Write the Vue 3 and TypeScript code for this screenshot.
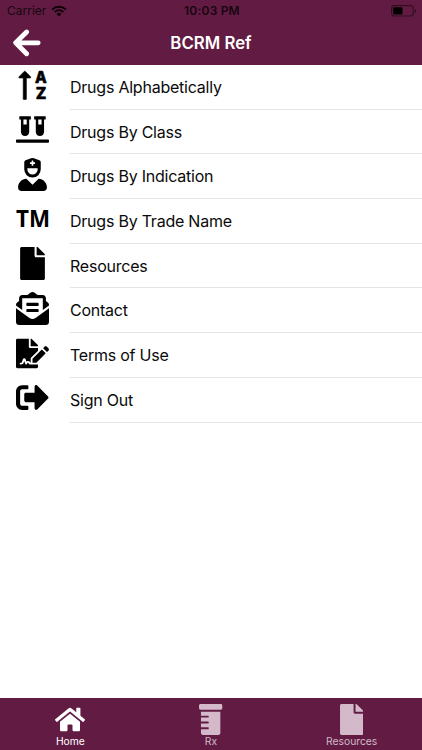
<script setup lang="ts">
interface Icon {
  viewBox: string
  path: string
}

interface MenuItem {
  label: string
  icon?: Icon
  glyph?: 'sort' | 'trademark'
}

interface Tab {
  label: string
  icon: Icon
  kind: 'wide' | 'tall'
  active: boolean
}

const file: Icon = {
  viewBox: '0 0 384 512',
  path: 'M224 136V0H24C10.7 0 0 10.7 0 24v464c0 13.3 10.7 24 24 24h336c13.3 0 24-10.7 24-24V160H248c-13.2 0-24-10.8-24-24zm160-14.1v6.1H256V0h6.1c6.4 0 12.5 2.5 17 7l97.9 98c4.5 4.5 7 10.6 7 16.9z',
}
const vials: Icon = {
  viewBox: '0 0 640 512',
  path: 'M72 64h24v240c0 44.1 35.9 80 80 80s80-35.9 80-80V64h24c4.4 0 8-3.6 8-8V8c0-4.4-3.6-8-8-8H72c-4.4 0-8 3.6-8 8v48c0 4.4 3.6 8 8 8zm72 0h64v96h-64V64zm480 384H16c-8.8 0-16 7.2-16 16v32c0 8.8 7.2 16 16 16h608c8.8 0 16-7.2 16-16v-32c0-8.8-7.2-16-16-16zM360 64h24v240c0 44.1 35.9 80 80 80s80-35.9 80-80V64h24c4.4 0 8-3.6 8-8V8c0-4.4-3.6-8-8-8H360c-4.4 0-8 3.6-8 8v48c0 4.4 3.6 8 8 8zm72 0h64v96h-64V64z',
}
const nurse: Icon = {
  viewBox: '0 0 448 512',
  path: 'M319.41,320,224,415.39,128.59,320C57.1,323.1,0,381.6,0,453.79A58.21,58.21,0,0,0,58.21,512H389.79A58.21,58.21,0,0,0,448,453.79C448,381.6,390.9,323.1,319.41,320ZM224,304A128,128,0,0,0,352,176V65.82a32,32,0,0,0-20.76-30L246.47,4.07a64,64,0,0,0-44.94,0L116.76,35.86A32,32,0,0,0,96,65.82V176A128,128,0,0,0,224,304ZM184,71.67a5,5,0,0,1,5-5h21.67V45a5,5,0,0,1,5-5h16.66a5,5,0,0,1,5,5V66.67H259a5,5,0,0,1,5,5V88.33a5,5,0,0,1-5,5H237.33V115a5,5,0,0,1-5,5H215.67a5,5,0,0,1-5-5V93.33H189a5,5,0,0,1-5-5ZM144,160H304v16a80,80,0,0,1-160,0Z',
}
const envelope: Icon = {
  viewBox: '0 0 512 512',
  path: 'M176 216h160c8.84 0 16-7.16 16-16v-16c0-8.84-7.16-16-16-16H176c-8.84 0-16 7.16-16 16v16c0 8.84 7.16 16 16 16zm-16 80c0 8.84 7.16 16 16 16h160c8.84 0 16-7.16 16-16v-16c0-8.84-7.16-16-16-16H176c-8.84 0-16 7.16-16 16v16zm96 121.13c-16.42 0-32.84-5.06-46.86-15.19L0 250.86V464c0 26.51 21.49 48 48 48h416c26.51 0 48-21.49 48-48V250.86L302.86 401.94c-14.02 10.12-30.44 15.19-46.86 15.19zm237.61-254.18c-8.85-6.94-17.24-13.47-29.61-22.81V96c0-26.51-21.49-48-48-48h-77.55c-3.04-2.2-5.87-4.26-9.04-6.56C312.6 29.17 279.2-.35 256 0c-23.2-.35-56.59 29.17-73.41 41.44-3.17 2.3-6 4.36-9.04 6.56H96c-26.51 0-48 21.49-48 48v44.14c-12.37 9.33-20.76 15.87-29.61 22.81A47.995 47.995 0 0 0 0 200.72v10.65l96 69.35V96h320v184.72l96-69.35v-10.65c0-14.74-6.78-28.67-18.39-37.77z',
}
const signature: Icon = {
  viewBox: '0 0 576 512',
  path: 'M218.17 424.14c-2.95-5.92-8.09-6.52-10.17-6.52s-7.22.59-10.02 6.19l-7.67 15.34c-6.37 12.78-25.03 11.37-29.48-2.09L144 386.59l-10.61 31.88c-5.89 17.66-22.38 29.53-41 29.53H80c-8.84 0-16-7.16-16-16s7.16-16 16-16h12.39c4.83 0 9.11-3.08 10.64-7.66l18.19-54.64c3.3-9.81 12.44-16.41 22.78-16.41s19.48 6.59 22.77 16.41l13.88 41.64c19.77-16.19 54.05-9.7 66 14.16 2.02 4.06 5.96 6.5 10.16 6.5v-82.12l128-127.09V160H248c-13.2 0-24-10.8-24-24V0H24C10.7 0 0 10.7 0 24v464c0 13.3 10.7 24 24 24h336c13.3 0 24-10.7 24-24v-40l-128-.11c-16.12-.31-30.58-9.28-37.83-23.75zM384 121.9c0-6.3-2.5-12.4-7-16.9L279.1 7c-4.5-4.5-10.6-7-17-7H256v128h128v-6.1zM288 348.2V416h67.9l162.8-162.7-67.9-67.9zM568.54 167.33l-31.87-31.87c-9.94-9.94-26.07-9.94-36.01 0l-27.25 27.25 67.88 67.88 27.25-27.25c9.95-9.94 9.95-26.07 0-36.01z',
}
const signOut: Icon = {
  viewBox: '0 0 512 512',
  path: 'M497 273L329 441c-15 15-41 4.5-41-17v-96H152c-13.3 0-24-10.7-24-24v-96c0-13.3 10.7-24 24-24h136V88c0-21.4 25.9-32 41-17l168 168c9.3 9.4 9.3 24.6 0 34zM192 436v-40c0-6.6-5.4-12-12-12H96c-17.7 0-32-14.3-32-32V160c0-17.7 14.3-32 32-32h84c6.6 0 12-5.4 12-12V76c0-6.6-5.4-12-12-12H96c-53 0-96 43-96 96v192c0 53 43 96 96 96h84c6.6 0 12-5.4 12-12z',
}
const home: Icon = {
  viewBox: '0 0 576 512',
  path: 'M280.37 148.26L96 300.11V464a16 16 0 0 0 16 16l112.06-.29a16 16 0 0 0 15.92-16V368a16 16 0 0 1 16-16h64a16 16 0 0 1 16 16v95.64a16 16 0 0 0 16 16.05L464 480a16 16 0 0 0 16-16V300L295.67 148.26a12.19 12.19 0 0 0-15.3 0zM571.6 251.47L488 182.56V44.05a12 12 0 0 0-12-12h-56a12 12 0 0 0-12 12v72.61L318.47 43a48 48 0 0 0-61 0L4.34 251.47a12 12 0 0 0-1.6 16.9l25.5 31A12 12 0 0 0 45.15 301l235.22-193.74a12.19 12.19 0 0 1 15.3 0L530.9 301a12 12 0 0 0 16.9-1.6l25.5-31a12 12 0 0 0-1.7-16.93z',
}
const bottle: Icon = {
  viewBox: '0 0 384 512',
  path: 'M32 192h120c4.4 0 8 3.6 8 8v16c0 4.4-3.6 8-8 8H32v64h120c4.4 0 8 3.6 8 8v16c0 4.4-3.6 8-8 8H32v64h120c4.4 0 8 3.6 8 8v16c0 4.4-3.6 8-8 8H32v64c0 17.6 14.4 32 32 32h256c17.6 0 32-14.4 32-32V128H32v64zM360 0H24C10.8 0 0 10.8 0 24v48c0 13.2 10.8 24 24 24h336c13.2 0 24-10.8 24-24V24c0-13.2-10.8-24-24-24z',
}

const items: MenuItem[] = [
  { label: 'Drugs Alphabetically', glyph: 'sort' },
  { label: 'Drugs By Class', icon: vials },
  { label: 'Drugs By Indication', icon: nurse },
  { label: 'Drugs By Trade Name', glyph: 'trademark' },
  { label: 'Resources', icon: file },
  { label: 'Contact', icon: envelope },
  { label: 'Terms of Use', icon: signature },
  { label: 'Sign Out', icon: signOut },
]

const tabs: Tab[] = [
  { label: 'Home', icon: home, kind: 'wide', active: true },
  { label: 'Rx', icon: bottle, kind: 'tall', active: false },
  { label: 'Resources', icon: file, kind: 'tall', active: false },
]
</script>

<template>
  <div class="screen">
    <header class="header">
      <div class="status">
        <div class="carrier">
          <span>Carrier</span>
          <svg class="wifi" viewBox="0 0 16 12">
            <path d="M1.2 4.5a9.7 9.7 0 0 1 13.6 0" />
            <path d="M3.7 7.1a6.1 6.1 0 0 1 8.6 0" />
            <path class="dot" d="M8 11.4L5.6 9a3.4 3.4 0 0 1 4.8 0z" />
          </svg>
        </div>
        <div class="time">10:03 PM</div>
        <div class="power">
          <svg class="battery" viewBox="0 0 26 12">
            <rect class="shell" x=".6" y=".6" width="21.6" height="10.4" rx="2.8" />
            <rect x="2.2" y="2.2" width="9.3" height="7.2" rx="1.2" />
            <path d="M23.8 4v4q1.4-.6 1.4-2t-1.4-2z" opacity=".55" />
          </svg>
        </div>
      </div>
      <div class="nav">
        <button class="back" aria-label="Back">
          <svg viewBox="0 0 30 28">
            <path d="M14.6 3L3.7 13.8l10.9 10.9M4.4 13.8h21.8" />
          </svg>
        </button>
        <h1 class="title">BCRM Ref</h1>
        <span></span>
      </div>
    </header>

    <main class="list">
      <div v-for="item in items" :key="item.label" class="row">
        <div class="icon">
          <svg v-if="item.icon" :viewBox="item.icon.viewBox">
            <path :d="item.icon.path" />
          </svg>
          <svg v-else-if="item.glyph === 'sort'" viewBox="0 0 33 33">
            <path class="arrow" d="M7.2 29.9V9H3.5q-1.2-.2-.5-1.2l5.2-5.4q.6-.5 1.2 0l5.2 5.4q.7 1-.5 1.2h-3.7v20.9q0 .6-.6.6H7.8q-.6 0-.6-.6z" />
            <text class="letter" x="19.1" y="13.9" textLength="11.8" lengthAdjust="spacingAndGlyphs">A</text>
            <text class="letter" x="19.7" y="30.2" textLength="10.6" lengthAdjust="spacingAndGlyphs">Z</text>
          </svg>
          <svg v-else viewBox="0 0 33 33">
            <text class="mark" x="0" y="24.3" textLength="34" lengthAdjust="spacingAndGlyphs">TM</text>
          </svg>
        </div>
        <div class="label">{{ item.label }}</div>
      </div>
    </main>

    <nav class="tabs">
      <div v-for="tab in tabs" :key="tab.label" class="tab" :class="{ active: tab.active }">
        <svg :class="tab.kind" :viewBox="tab.icon.viewBox">
          <path :d="tab.icon.path" />
        </svg>
        <span>{{ tab.label }}</span>
      </div>
    </nav>
  </div>
</template>

<style>
body {
  margin: 0;
  background: #fff;
}
</style>

<style scoped>
.screen {
  display: flex;
  flex-direction: column;
  height: 750px;
  overflow: hidden;
  font-family: Inter, "Liberation Sans", sans-serif;
  color: #0a0a0a;
}
.header {
  box-sizing: border-box;
  flex: none;
  height: 65px;
  background: #621c43;
}
.status {
  display: grid;
  grid-template-columns: 1fr auto 1fr;
  align-items: center;
  height: 21px;
  padding: 0 5px 0 7px;
  color: #170510;
  font-size: 12px;
}
.carrier {
  display: flex;
  align-items: center;
  gap: 5px;
}
.wifi {
  width: 16px;
  height: 12px;
  fill: none;
  stroke: #120009;
  stroke-width: 2;
}
.wifi .dot {
  fill: #120009;
  stroke: none;
}
.time {
  font-weight: 600;
  letter-spacing: 0.2px;
}
.power {
  display: flex;
  justify-content: flex-end;
}
.battery {
  width: 26px;
  height: 12px;
  fill: #000;
}
.battery .shell {
  fill: none;
  stroke: #330c22;
  stroke-width: 1.1;
}
.nav {
  display: grid;
  grid-template-columns: 1fr auto 1fr;
  align-items: center;
  height: 44px;
}
.back {
  display: flex;
  padding: 0 0 0 12px;
  border: 0;
  background: none;
}
.back svg {
  width: 30px;
  height: 28px;
  fill: none;
  stroke: #fff;
  stroke-width: 4.8;
  stroke-linecap: round;
  stroke-linejoin: round;
}
.title {
  margin: 0;
  color: #fff;
  font-size: 16.8px;
  font-weight: 600;
}
.list {
  flex: 1;
}
.row {
  display: flex;
  height: 44.7px;
}
.icon {
  display: flex;
  justify-content: center;
  flex: none;
  width: 33px;
  height: 33px;
  padding: 3.5px 20.8px 0 16.2px;
}
.icon svg {
  width: 33px;
  height: 33px;
  overflow: visible;
}
.arrow,
.letter {
  stroke: #0a0a0a;
  stroke-width: 0.6;
  stroke-linejoin: round;
}
.letter {
  font-size: 16.3px;
  font-weight: 800;
}
.mark {
  font-family: "Open Sans", sans-serif;
  font-size: 22.5px;
  font-weight: 700;
}
.icon svg {
  fill: #000;
}
.label {
  box-sizing: border-box;
  flex: 1;
  height: 44.7px;
  border-bottom: 1px solid #e4e4e4;
  font-size: 16px;
  letter-spacing: -0.23px;
  line-height: 44.5px;
}
.tabs {
  box-sizing: border-box;
  display: grid;
  grid-template-columns: repeat(3, 1fr);
  flex: none;
  height: 52px;
  background: #621c43;
}
.tab {
  display: flex;
  flex-direction: column;
  align-items: center;
  padding-top: 5.5px;
  color: #d3b9c9;
  font-size: 10.3px;
  line-height: 13px;
}
.tab.active {
  color: #fff;
}
.tab svg {
  height: 31px;
  fill: currentColor;
}
.tab .wide {
  width: 30px;
}
.tab .tall {
  width: 23.3px;
}
</style>
